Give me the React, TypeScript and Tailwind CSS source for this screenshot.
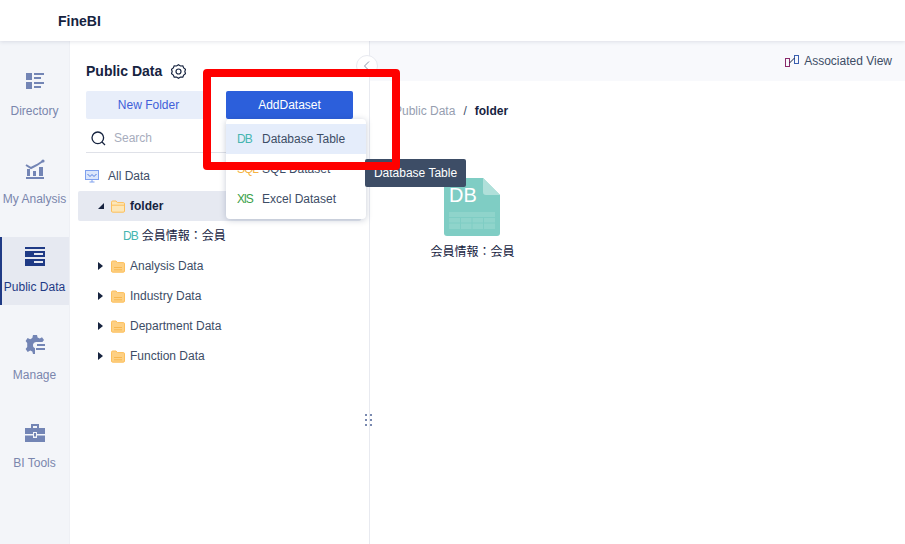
import React from "react";

const FONT = "font-['Liberation_Sans','Noto_Sans_CJK_JP',sans-serif]";

function FolderIcon({ open }: { open?: boolean }) {
  return (
    <svg width="14" height="13" viewBox="0 0 14 13" className="shrink-0">
      <path d="M0.5 2.2 A1.2 1.2 0 0 1 1.7 1 H5 L6.4 2.6 H12.4 A1.2 1.2 0 0 1 13.5 3.8 V11 A1.2 1.2 0 0 1 12.3 12.2 H1.7 A1.2 1.2 0 0 1 0.5 11 Z" fill={open ? "#fde7b8" : "#fdd084"} stroke="#fcbf5c" strokeWidth="1" />
      {open ? <path d="M1 5.2 H13" stroke="#fcbf5c" strokeWidth="1" /> : <path d="M3 7.5 H11 M3 9.8 H11" stroke="#f8b84e" strokeWidth="1" />}
    </svg>
  );
}

function Caret({ open }: { open?: boolean }) {
  return open ? (
    <svg width="6" height="6" viewBox="0 0 6 6" className="shrink-0"><path d="M0 6 H6 V0 Z" fill="#16233f" /></svg>
  ) : (
    <svg width="5" height="8" viewBox="0 0 5 8" className="shrink-0"><path d="M0 0 L5 4 L0 8 Z" fill="#16233f" /></svg>
  );
}

function Side({ label, active, children }: { label: string; active?: boolean; children: React.ReactNode }) {
  return (
    <div className={active ? "h-[68px] flex flex-col items-center pt-[9px] bg-[#e6e9f1] border-l-2 border-[#1f3a85] pr-[2px] text-[#1f3a85]" : "h-[68px] flex flex-col items-center pt-[9px] text-[#7a86ad]"}>
      <div className="h-[22px] flex items-center justify-center">{children}</div>
      <div className="mt-[12px] text-[12px] leading-[14px] whitespace-nowrap">{label}</div>
    </div>
  );
}

function TreeRow({ label }: { label: string }) {
  return (
    <div className="h-[30px] flex items-center pl-[28px] text-[#3d4d66]">
      <span className="w-[5px] mr-[8px] flex"><Caret /></span>
      <FolderIcon />
      <span className="ml-[5px] text-[12px]">{label}</span>
    </div>
  );
}

export default function App() {
  const c = "#7385b5";
  return (
    <div className={`${FONT} relative w-[905px] h-[544px] overflow-hidden bg-white text-[#16233f]`}>
      <header className="relative z-10 h-[41px] bg-white shadow-[0_1px_4px_rgba(30,40,80,0.12)] flex items-center pl-[58px]">
        <span className="text-[14px] font-bold leading-none text-[#16233f]">FineBI</span>
      </header>
      <div className="flex h-[503px]">
        <aside className="w-[70px] shrink-0 bg-[#f3f5f9] border-r border-[#eef0f5] pt-[20px] flex flex-col gap-5">
          <Side label="Directory">
            <svg width="20" height="18" viewBox="0 0 20 18"><path d="M1 1h6v7H1zM1 10h6v7H1z" fill={c} /><path d="M9 1h10v2H9zM9 5h7v2H9zM9 10h10v2H9zM9 14h7v2H9z" fill={c} /></svg>
          </Side>
          <Side label="My Analysis">
            <svg width="20" height="20" viewBox="0 0 20 20"><path d="M1 6 L6 9 L12 6 L18 2" fill="none" stroke={c} strokeWidth="2" /><circle cx="18" cy="2" r="1.6" fill={c} /><path d="M2 10h3v7H2zM8 12h3v5H8zM14 8h4v9h-4zM1 18h18v2H1z" fill={c} /></svg>
          </Side>
          <Side label="Public Data" active>
            <svg width="20" height="20" viewBox="0 0 20 20"><path d="M0 0h20v2H0z" fill="#1f3a85" /><path fillRule="evenodd" d="M0 4h20v6H0zM9 6h9v2H9z" fill="#1f3a85" /><path fillRule="evenodd" d="M0 12h20v7H0zM9 14h9v2H9z" fill="#1f3a85" /></svg>
          </Side>
          <Side label="Manage">
            <svg width="20" height="20" viewBox="0 0 20 20"><path d="M8 0h4l.6 2.600 2.200 1L17 2.300 19 5l-1.600 2H11a3.200 3.200 0 0 0-1 6.200V19H8l-.7-2.600-2.100-1L2.700 17 .6 14l1.600-2V8L.6 6l2-3 2.600 1.200 2.100-1.100z" fill={c} /><path d="M12 9h8v2h-8zM11 13h9v2h-9z" fill={c} /></svg>
          </Side>
          <Side label="BI Tools">
            <svg width="20" height="20" viewBox="0 0 20 20"><path fillRule="evenodd" d="M6 1h8v4h-2V3H8v2H6z" fill={c} /><path d="M0 5h20v6h-8V9H8v2H0zM0 12.500h8V15h4v-2.500h8V19H0z" fill={c} /><path d="M9 10h2v3.500H9z" fill={c} /></svg>
          </Side>
        </aside>

        <section className="relative w-[300px] shrink-0 border-r border-[#e8eaf0] pt-[20px]">
          <div className="h-[20px] flex items-center pl-[16px] gap-[9px]">
            <span className="text-[14px] font-bold text-[#16233f]">Public Data</span>
            <svg width="15" height="15" viewBox="0 0 24 24" fill="none" stroke="#16233f" strokeWidth="1.900"><path d="M12 1.200l3.200 2 3.700-.300 1.400 3.400 2.900 2.300-1.100 3.400 1.100 3.400-2.900 2.300-1.400 3.400-3.700-.300-3.200 2-3.200-2-3.700.300-1.400-3.400-2.900-2.300 1.100-3.400-1.100-3.400 2.900-2.300 1.400-3.400 3.700.300z" /><circle cx="12" cy="12" r="4" /></svg>
          </div>
          <div className="mt-[10px] flex pl-[16px]">
            <div className="w-[125px] h-[28px] rounded-[2px] bg-[#e8eefa] text-[#3f5fd8] text-[12px] flex items-center justify-center">New Folder</div>
            <div className="ml-[15px] w-[127px] h-[28px] rounded-[2px] bg-[#2c5fdb] text-white text-[12px] flex items-center justify-center">AddDataset</div>
          </div>
          <div className="mt-[5px] ml-[16px] mr-[16px] h-[29px] border-b border-[#dfe1e8] flex items-center pl-[5px] gap-[8px]">
            <svg width="15" height="15" viewBox="0 0 15 15" fill="none" stroke="#16233f" strokeWidth="1.300"><circle cx="6.800" cy="6.800" r="5.800" /><path d="M11 11 L14 14" /></svg>
            <span className="text-[12px] text-[#a7adbd]">Search</span>
          </div>
          <div className="mt-[8px]">
            <div className="h-[30px] flex items-center pl-[15px] text-[#3d4d66]">
              <svg width="14" height="13" viewBox="0 0 14 13" className="shrink-0"><rect x="0.500" y="0.500" width="13" height="9" fill="#dbe6fb" stroke="#7ea0ee" /><path d="M2.500 4 L5 6.500 L7 4.500 L9 6.500 L11.500 4" fill="none" stroke="#4f7be0" /><path d="M4.500 12h5M7 10v2" stroke="#7ea0ee" /></svg>
              <span className="ml-[9px] text-[12px]">All Data</span>
            </div>
            <div className="ml-[8px] mr-[8px] h-[30px] rounded-[2px] bg-[#e6e9f1] flex items-center pl-[20px]">
              <Caret open />
              <span className="ml-[7px]"><FolderIcon open /></span>
              <span className="ml-[5px] text-[12px] font-bold text-[#16233f]">folder</span>
            </div>
            <div className="h-[30px] flex items-center pl-[53px] text-[#3d4d66]">
              <span className="text-[12px] text-[#45b5b0] tracking-[-1px]">DB</span>
              <span className="ml-[4px] text-[12px] text-[#16233f]">会員情報：会員</span>
            </div>
            <TreeRow label="Analysis Data" />
            <TreeRow label="Industry Data" />
            <TreeRow label="Department Data" />
            <TreeRow label="Function Data" />
          </div>

          <div className="absolute left-[286px] top-[14px] w-[22px] h-[22px] rounded-full bg-white border border-[#e8eaf0] flex items-center justify-center">
            <svg width="8" height="10" viewBox="0 0 8 10" fill="none" stroke="#8a93a8" strokeWidth="1"><path d="M6 0.500 L1.500 5 L6 9.500" /></svg>
          </div>
          <div className="absolute left-[295px] top-[373px] grid grid-cols-2 gap-x-[5px] gap-y-[3px]">
            {[0, 1, 2, 3, 4, 5].map((i) => (
              <span key={i} className="w-[2px] h-[2px] bg-[#7a8ab0]" />
            ))}
          </div>
          <div className="absolute left-[156px] top-[78px] w-[140px] h-[100px] rounded-[4px] bg-white shadow-[0_1px_6px_rgba(30,50,90,0.25)] py-[5px]">
            <div className="h-[30px] bg-[#e5edfb] flex items-center text-[12px] text-[#3d4d66]">
              <span className="w-[36px] pl-[11px] text-[12px] text-[#45b5b0] tracking-[-1px]">DB</span>Database Table
            </div>
            <div className="h-[30px] flex items-center text-[12px] text-[#3d4d66]">
              <span className="w-[36px] pl-[11px] text-[12px] text-[#f5b342] tracking-[-1px]">SQL</span>SQL Dataset
            </div>
            <div className="h-[30px] flex items-center text-[12px] text-[#3d4d66]">
              <span className="w-[36px] pl-[11px] text-[12px] text-[#3aa048] tracking-[-1px]">XlS</span>Excel Dataset
            </div>
          </div>
        </section>

        <main className="flex-1 min-w-0">
          <div className="h-[40px] bg-[#f8f9fc] flex items-center justify-end pr-[13px]">
            <svg width="14" height="12" viewBox="0 0 14 12" fill="none" strokeWidth="1"><rect x="0.500" y="3.500" width="4" height="8" stroke="#8a2a6a" /><rect x="9.500" y="0.500" width="4" height="8" stroke="#3a5fb0" /><path d="M4.500 8 L9.500 3" stroke="#16233f" /></svg>
            <span className="ml-[5px] text-[12px] text-[#3d4d66]">Associated View</span>
          </div>
          <div className="h-[20px] mt-[20px] ml-[24px] flex items-center text-[12px] whitespace-nowrap">
            <span className="text-[#969eb0]">Public Data</span>
            <span className="mx-[8px] text-[#3d4d66]">/</span>
            <span className="font-bold text-[#16233f]">folder</span>
          </div>
          <div className="mt-[57px] ml-[60px] w-[85px] flex flex-col items-center">
            <svg width="56" height="58" viewBox="0 0 56 58" className="mr-[2px]">
              <path d="M3 0 H39 L56 17 V55 A3 3 0 0 1 53 58 H3 A3 3 0 0 1 0 55 V3 A3 3 0 0 1 3 0 Z" fill="#7fcdc4" />
              <path d="M39 0 L56 17 H42 A3 3 0 0 1 39 14 Z" fill="#b0e0da" />
              <rect x="5" y="34" width="46" height="17" fill="#8fd4cb" />
              <path d="M5 39.500 H51 M5 45 H51 M16.500 39 V51 M28 39 V51 M39.500 39 V51" stroke="#7fcdc4" strokeWidth="1" />
              <text x="5" y="24" fill="#ffffff" fontSize="20" fontFamily="Liberation Sans, sans-serif">DB</text>
            </svg>
            <span className="mt-[9px] text-[12px] leading-[14px] text-[#16233f] whitespace-nowrap">会員情報：会員</span>
          </div>
        </main>
      </div>

      <div className="absolute left-[365px] top-[159px] w-[101px] h-[28px] rounded-[2px] bg-[#3d4d66] text-white text-[12px] flex items-center justify-center">Database Table</div>
      <div className="absolute left-[203px] top-[69px] w-[197px] h-[101px] rounded-[4px] border-[8px] border-[#ff0000]" />
    </div>
  );
}
